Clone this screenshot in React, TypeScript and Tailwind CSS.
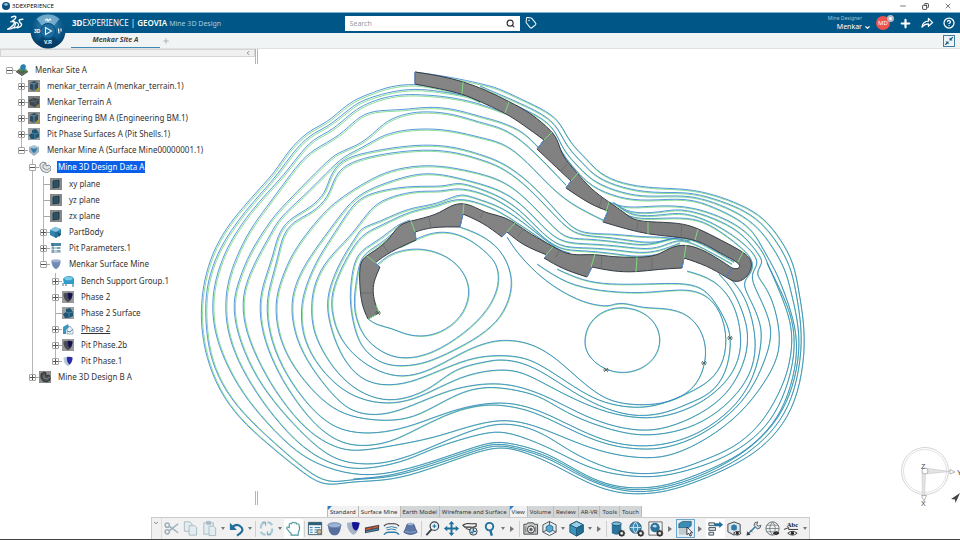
import type { ReactNode } from 'react';
import { ChevronDown, Minus, Plus, Search, Tag, X, Copy, CircleHelp } from 'lucide-react';

/* ------------------------------------------------------------------ */
/* Pit contours                                                        */
/* ------------------------------------------------------------------ */

// West wall going clockwise over the north side, outermost first
const upperContours = [
  '202,303 205,280 213,253 227,228 242,209 260,188 275,172 288,152 307,132 327,123 343,108 357,99 373,93 390,87 415,84 440,89 462,94',
  '206,303 209,280 218,253 232,230 245,212 263,191 278,174 293,153 310,135 328,127 347,111 360,102 377,96 397,91 420,89 447,93 467,96 480,102',
  '213,303 216,280 225,253 237,232 250,213 268,192 283,176 298,157 313,139 332,131 350,114 363,106 380,99 400,95 420,95 447,97 477,103 505,113',
  '226,303 229,280 237,257 250,230 267,207 283,185 300,163 313,150 340,136 357,119 373,111 403,110.5 427,107 453,109 480,117 500,122 523,132 538,147',
  '234,303 240,280 250,253 267,227 277,213 297,192 323,166 337,153 357,146 373,134 387,121 407,114 427,112 453,114 480,123 497,127 517,137 540,158 566,185',
  '243,303 248,280 258,257 272,233 280,218 303,197 327,173 343,157 363,148 380,137 400,131 427,129 453,131 480,138 500,143 520,155 547,183 570,203 603,220',
  '260,303 265,280 273,257 278,237 288,220 310,208 325,193 330,177 343,160 367,153 400,147 430,145 457,148 480,155 500,162 523,177 547,200 567,222 583,233 613,233 637,237 667,237 690,241',
  '267,303 272,280 278,258 283,237 293,222 313,212 328,197 335,177 347,165 370,157 400,152 430,150 457,153 480,160 500,167 523,183 547,207 567,227 582,235 613,237 640,242 660,242 680,237 697,238 737,261',
  '276,303 282,280 293,253 310,230 327,210 343,197 367,182 390,171 420,166 447,167 480,174 500,181 520,193 547,220 565,237 583,238 613,241 640,245 657,243 677,238 697,241 734,262',
  '292,303 298,280 310,257 330,230 347,207 363,193 387,183 413,175 433,174 453,177 480,184 500,191 520,203 540,223 560,241 583,243 613,245 643,249 660,247 677,241 693,243 732,264',
  '302,303 309,280 319,257 335,233 350,210 363,197 387,190 413,186 442,187 455,183 467,185 480,189 500,197 520,210 540,230 560,246 583,247 613,249 640,253 660,250 680,243',
  '312,303 316,282 327,260 350,237 363,220 377,203 400,195 420,191 442,192 457,188 480,193 500,202 520,215 540,234 560,249 583,250 613,253 637,257 660,254',
  '327,303 333,280 343,257 357,237 362,228 380,222 400,212 417,207 437,204 457,195 467,196 480,200 500,207 517,218 537,233 557,249 570,253',
  '331,303 337,280 348,257 362,235 380,227 400,216 420,209 437,207 457,198 480,204 500,212 517,223 537,236 552,247',
  '350,303 352,280 355,263 362,250 380,240 397,225 410,220',
  '354,303 357,280 360,263 367,252 382,243 400,227',
];

// The same contours continued counter-clockwise round the south and east
const lowerContours = [
  '202,327 207,357 220,390 240,418 267,443 300,470 317,481 333,484.5 353,481 387,480 417,473 460,458 487,450 510,448 543,460 567,472 593,485 617,492 640,493.5 667,491 700,480 733,465 760,448 783,423 797,393 804,353 803,320 798,290 793,263 780,240 763,218 740,205 713,195 687,189 653,188 623,183 600,173 587,158 570,143 560,123 547,112 520,99 497,88 480,84 450,77 415,72',
  '207,330 212,360 227,392 250,420 283,450 313,475 333,481.5 353,478.5 387,477.5 417,470 460,456 487,448 505,446 545,457 567,469 593,482 617,489 640,491.5 667,488.5 700,477.5 733,462 758,444 780,420 794,390 801,350 800,320 795,290 790,267 777,243 760,222 740,209 713,199 687,192 653,193 623,187 597,177 583,162 567,147 557,127 543,115 517,102 480,86',
  '215,330 225,360 243,393 267,422 297,452 327,467 360,474.5 390,472.5 427,463 460,452 487,444 505,442.5 543,452 567,465 593,479 617,486 640,487.5 667,485 700,473 733,458 757,440 777,417 790,387 797,350 793,320 783,290 775,270 763,250 753,232 737,219 713,208 687,198 647,201 620,197 592,186 577,170 562,153 552,132',
  '228,330 238,360 257,393 280,423 310,453 347,468 377,466 407,460 433,448 467,438 490,433 510,433 547,447 573,460 600,471 633,476 660,476 687,470 717,460 747,443 770,420 785,390 794,353 792,320 780,290 767,263',
  '238,333 253,370 273,400 300,430 330,457 360,463 387,462 417,453 447,440 480,428 503,424 528,428 550,438 573,453 600,465 623,471.5 647,473.5 677,470 707,458 733,447 757,427 773,403 787,373 792,340 788,315 778,288 767,263 763,253 750,237 733,223 693,207 657,206 627,208 609,202',
  '247,333 262,367 280,397 307,430 337,447 360,450 393,445 433,438 467,427 500,420 527,424 553,433 583,445 613,454 647,457.5 673,454 707,438 740,413 763,383 777,357 779,333 773,302 763,283 756,274 762,263 760,257 747,240 733,228 707,216 680,209 660,212 630,213 613,202',
  '263,333 275,365 291,393 313,422 337,440 360,445 390,442 420,427 453,412 480,406 500,405.5 527,410 553,421 580,434 610,445 640,448.5 667,447 700,435 730,413 750,390 763,363 771,337 768,318 760,297 750,277 757,266 755,257 743,243 713,223 683,213 663,215 633,216 617,205',
  '270,333 282,366 303,398 327,422 350,431 377,432.5 407,427 440,415 467,407 500,402.5 527,407 553,417 580,430 610,442 640,445.5 667,443 700,432 733,407 753,377 761,340 759,322 752,302 742,283 751,274 752,260 740,247 713,227 693,219 667,218 637,219 623,213',
  '279,333 290,360 310,387 333,408 357,417 387,420 413,417 440,403 463,392 483,388 500,388 523,392 543,398 567,413 597,425 627,433 650,434.5 680,430 710,417 737,393 752,367 755,340 750,313 742,293 731,279',
  '295,332 307,360 327,387 347,408 370,414 393,412 420,402 450,390 477,385 500,384 523,388 550,398 577,412 607,424 640,430 667,427 700,413 727,393 743,363 747,340 745,320 733,290 719,274',
  '303,333 315,360 337,385 360,398 387,403 413,399 440,387 467,375 500,370 523,373 550,387 577,400 607,412 640,417.5 667,415 700,403 727,380 738,357 740,335 733,303 713,280 687,271',
  '313,325 319,343 333,367 353,387 377,398 400,399 427,390 447,375 463,367 487,362 500,360 523,363 547,375 573,392 600,406 623,413 643,415.5 667,412 687,403 710,393 725,373 730,343 727,325 713,300 700,288 680,283.5 647,284 610,284 583,280 557,269',
  '332,330 343,357 360,377 383,384.5 410,382 440,370 467,360 490,356 520,357 540,365 567,382 593,398 617,405 640,407 660,404 687,393 710,380 723,360 725.5,333 717,307 700,293 680,290 653,292 633,292.5 600,290 567,283 537,264',
  '338,333 353,353 373,368 397,376 420,373 443,363 467,350 487,343 503,340.5 522,342 541,349 560,362 580,380 600,395 617,402 640,404.5 660,403 680,397 697,383 704,363 705,347 700,330 687,315 667,308.5 643,308.5 627,303 613,304 607,306 583,302 557,288 537,273 517,252 507,237',
  '357,337 368,352 383,363 403,365.5 427,362 453,350 480,335 500,317 510,293 510,273 500,250 480,235 460,227',
  '358,322 367,340 387,354 407,357.5 433,352 463,333 487,310 498,285 496,267 490,257 473,242 453,233 433,233 417,239 400,247',
];

const extraContours = [
  '353,479 387,476 417,468 460,454 487,446 505,444.5 545,455 569,468 593,480.5 617,487.5 640,489.5 667,486.5 700,475.5 731,460 757,441 778,417 792,387 799,350 797,320 790,290 785,270 772,247 757,227 737,213 713,203 687,195 647,197 623,192 595,182 580,167 563,150 555,131 540,117 510,103',
  '378,264 388,256 402,251 423,249 447,257 463,273 469,294 460,317 440,332 420,336 403,333 392,328 377,325 368,319',
  '585,341 588,327 597,316 611,309 627,308 643,313 655,324 660,340 655,356 643,367 626,372.5 608,370 594,361 587,351 585,341',
];

// Each ramp is a ring of edges that meet in sharp corners
const upperRamp = [
  '415,72 440,76 463,82 485,90 509,102 530,113 552,132 558,142 563,157 578,173 590,188 609,202 623,211 633,219 648,222 680,223 698,229 720,240 743,252 750,260 751,268 747,276 740,281 733,281 726,277',
  '726,277 732,268',
  '732,268 737,269 739,266 737,262 717,252 697,240 673,237 648,234 627,229 603,222',
  '603,222 608,211',
  '608,211 590,204 566,188',
  '566,188 571,181',
  '571,181 557,168 537,149',
  '537,149 544,140',
  '544,140 523,125 505,113 480,102 462,94 440,89 415,84',
];

const lowerRamp = [
  '368,319 362,305 360,285 360,270 362,261 368,255 383,245 392,235 400,225 411,221 437,215 450,206 464,203 480,210 487,213 503,217 515,223 530,234 553,246 565,253 580,255 595,254 613,257 637,257 656,256 670,248 686,245 707,252 732,268',
  '732,268 726,277',
  '726,277 707,266 684,258',
  '684,258 682,268',
  '682,268 660,269 635,272 613,271 592,267',
  '592,267 587,277',
  '587,277 563,269 544,258',
  '544,258 547,255',
  '547,255 523,245 507,232',
  '507,232 502,237',
  '502,237 483,223 463,214',
  '463,214 460,227',
  '460,227 433,227 415,232',
  '415,232 416,240',
  '416,240 390,252 375,263',
  '375,263 380,267',
  '380,267 375,279 373,290 375,303 379,313',
];

const greenJoints =
  'M463 82L462 94M509 102L505 113M552 132L544 140M578 173L571 181M609 202L606 212M648 222V234M698 229L695 240M743 252L738 262M367 256L377 264M411 221L415 232M464 203L463 214M515 223L507 232M553 247L545 256M595 254L591 267M637 257L636 272M686 245L684 258M368 319L379 313L376 305';

const blueJoints =
  'M415 72V84M544 140L537 149M571 181L566 188M608 211L603 222M732 268L726 277M415 232L416 240M463 214L460 227M507 232L502 237M547 255L544 258M592 267L587 277M684 258L682 268M375 263L380 267';

const greyJoints =
  'M567 164L561 171M602 198L599 207M638 221L637 231M682 224L681 236M383 245L388 252M429 218L431 227M484 211L480 218M523 230L518 236M559 251L555 258M602 256L601 269M652 258V269M360 293H374';

const marks = [
  [378, 313],
  [606, 370],
  [704, 363],
  [730, 338],
];

type Point = [number, number];

const parse = (s: string) => s.split(' ').map((p) => p.split(',').map(Number) as Point);

// Pulls every point towards (k < 0) or away from (k > 0) its neighbours
function relax(p: Point[], k: number, closed: boolean): Point[] {
  const last = p.length - 1;
  return p.map(([x, y], i) => {
    if (!closed && (i === 0 || i === last)) return [x, y];
    const a = i === 0 ? p[last - 1] : p[i - 1];
    const b = i === last ? p[1] : p[i + 1];
    return [x + k * (x - (a[0] + b[0]) / 2), y + k * (y - (a[1] + b[1]) / 2)];
  });
}

// Uniform cubic B-spline through the filtered points
function spline(raw: Point[], start = 'M') {
  const last = raw.length - 1;
  const closed = last > 2 && raw[0][0] === raw[last][0] && raw[0][1] === raw[last][1];
  const p = relax(relax(raw, -0.3, closed), 0.64, closed);
  const before: Point = closed ? p[last - 1] : [2 * p[0][0] - p[1][0], 2 * p[0][1] - p[1][1]];
  const after: Point = closed ? p[1] : [2 * p[last][0] - p[last - 1][0], 2 * p[last][1] - p[last - 1][1]];
  const q = [before, ...p, after];
  const knot = (i: number, n: 0 | 1) => ((q[i - 1][n] + 4 * q[i][n] + q[i + 1][n]) / 6).toFixed(2);

  let d = `${start}${knot(1, 0)} ${knot(1, 1)}`;
  for (let i = 1; i <= last; i++) {
    const [bx, by] = q[i];
    const [cx, cy] = q[i + 1];
    d += `C${((2 * bx + cx) / 3).toFixed(2)} ${((2 * by + cy) / 3).toFixed(2)} ${((bx + 2 * cx) / 3).toFixed(2)} ${((by + 2 * cy) / 3).toFixed(2)} ${knot(i + 1, 0)} ${knot(i + 1, 1)}`;
  }
  return d;
}

const contourPaths = [
  ...upperContours.map((upper, i) => spline([...parse(upper).reverse(), ...parse(lowerContours[i])])),
  ...extraContours.map((c) => spline(parse(c))),
];

const rampPaths = [upperRamp, lowerRamp].map(
  (edges) => edges.map((edge, i) => spline(parse(edge), i === 0 ? 'M' : 'L')).join('') + 'Z',
);

function MineView() {
  return (
    <svg
      viewBox="0 49 960 450"
      className="absolute inset-x-0 top-0 w-full"
      fill="none"
      role="img"
      aria-label="Pit contours"
    >
      <defs>
        <linearGradient id="rock" x1="0" y1="0" x2="1" y2="1">
          <stop offset="0" stopColor="#868686" />
          <stop offset="1" stopColor="#7a7a7a" />
        </linearGradient>
      </defs>
      <g stroke="#8adf96" transform="translate(1.6 1.7) scale(.998 .9965)">
        {contourPaths.map((d, i) => (
          <path key={i} d={d} />
        ))}
      </g>
      <g stroke="#2f80d0" strokeOpacity=".8">
        {contourPaths.map((d, i) => (
          <path key={i} d={d} />
        ))}
      </g>
      {rampPaths.map((d, i) => (
        <path key={i} d={d} fill="url(#rock)" stroke="#343c46" />
      ))}
      <path d={greyJoints} stroke="#666" strokeWidth=".7" />
      <path d={greenJoints} stroke="#7fd97f" />
      <path d={blueJoints} stroke="#5a93e0" />
      {marks.map(([x, y]) => (
        <path
          key={x}
          d={`M${x - 2} ${y - 2}l4 4M${x + 2} ${y - 2}l-4 4M${x - 3} ${y}h6`}
          stroke="#4d5a55"
          strokeWidth=".8"
        />
      ))}
    </svg>
  );
}

function AxisTriad() {
  return (
    <svg viewBox="0 0 64 66" className="absolute right-0 bottom-0 w-16" fill="none" aria-hidden="true">
      <circle cx="29" cy="31" r="23.500" stroke="#d6d6d6" />
      <circle cx="29" cy="31" r="21.500" stroke="#e2e2e2" />
      <path d="M28 28l26 3.500-26 2.500z" fill="#e4e4e4" stroke="#c4c4c4" strokeWidth=".6" />
      <path d="M26 32l3.500 0-1 24-2 0z" fill="#e4e4e4" stroke="#c4c4c4" strokeWidth=".6" />
      <path d="M54 29.500l5 2.500-5 2z" fill="#fff" stroke="#999" strokeWidth=".7" />
      <path d="M25.500 55.500h5l-2.500 5.500z" fill="#fff" stroke="#999" strokeWidth=".7" />
      <circle cx="29" cy="31" r="3" fill="#fff" stroke="#b5b5b5" />
      <path d="M64 53l-9 6 4 .5.500 3.500z" fill="#444" />
      <g className="font-['Liberation_Sans'] text-[7px]" fill="#444">
        <text x="25" y="29">Z</text>
        <text x="61" y="35">Y</text>
        <text x="25" y="66">X</text>
      </g>
    </svg>
  );
}

/* ------------------------------------------------------------------ */
/* Specification tree                                                  */
/* ------------------------------------------------------------------ */

type IconKind =
  | 'site' | 'block' | 'terrain' | 'surface' | 'mine' | 'part' | 'plane' | 'body'
  | 'params' | 'shield' | 'bench' | 'shieldDark' | 'phase' | 'shieldLight' | 'partDark';

interface TreeNode {
  label: string;
  icon: IconKind;
  leaf?: boolean;
  look?: 'selected' | 'underlined';
  children?: TreeNode[];
}

const tree: TreeNode = {
  label: 'Menkar Site A',
  icon: 'site',
  children: [
    { label: 'menkar_terrain A (menkar_terrain.1)', icon: 'block' },
    { label: 'Menkar Terrain A', icon: 'terrain' },
    { label: 'Engineering BM A (Engineering BM.1)', icon: 'block' },
    { label: 'Pit Phase Surfaces A (Pit Shells.1)', icon: 'surface' },
    {
      label: 'Menkar Mine A (Surface Mine00000001.1)',
      icon: 'mine',
      children: [
        {
          label: 'Mine 3D Design Data A',
          icon: 'part',
          look: 'selected',
          children: [
            { label: 'xy plane', icon: 'plane', leaf: true },
            { label: 'yz plane', icon: 'plane', leaf: true },
            { label: 'zx plane', icon: 'plane', leaf: true },
            { label: 'PartBody', icon: 'body' },
            { label: 'Pit Parameters.1', icon: 'params' },
            {
              label: 'Menkar Surface Mine',
              icon: 'shield',
              children: [
                { label: 'Bench Support Group.1', icon: 'bench' },
                { label: 'Phase 2', icon: 'shieldDark' },
                { label: 'Phase 2 Surface', icon: 'surface', leaf: true },
                { label: 'Phase 2', icon: 'phase', look: 'underlined' },
                { label: 'Pit Phase.2b', icon: 'shieldDark' },
                { label: 'Pit Phase.1', icon: 'shieldLight' },
              ],
            },
          ],
        },
        { label: 'Mine 3D Design B A', icon: 'partDark' },
      ],
    },
  ],
};

const shieldPath = 'M1.500 2.500Q6 .8 10.500 2.500Q10.800 8.500 6 11.300Q1.200 8.500 1.500 2.500z';

const treeIcons: Record<IconKind, ReactNode> = {
  site: (
    <>
      <path d="M0 7l6-3 6 3-6 4z" fill="#55664a" />
      <path d="M0 7l6 4v1L0 8zM12 7l-6 4v1l6-4z" fill="#2f3b35" />
      <path d="M5 1l3-1 2 2-1 4-3 1-2-3z" fill="#2a7fb0" />
      <path d="M2 6l2-2 2 3zM8 7l2-3 1 3z" fill="#5ba046" />
    </>
  ),
  block: (
    <>
      <path d="M0 0h12v12H0z" fill="#8d8d8d" />
      <path d="M2 3l4-2 4 1v6l-4 3-4-2z" fill="#2e4d63" />
      <path d="M2 3l4 1v7M6 4l4-2" stroke="#86a9bd" strokeWidth=".7" />
      <path d="M8 10l3-3v3l-3 2z" fill="#a99b2b" />
    </>
  ),
  terrain: (
    <>
      <path d="M0 0h12v12H0z" fill="#7c7c7c" />
      <path d="M1 4l4-2 6 1v5L7 11 2 9z" fill="#3c4750" />
      <path d="M2 5l4 1 4-2M4 3l5 6" stroke="#6c7d86" strokeWidth=".6" />
      <path d="M8 11l3-3v2l-2 2z" fill="#9b8b2b" />
    </>
  ),
  surface: (
    <>
      <path d="M0 0h12v12H0z" fill="#9aa0a3" />
      <path d="M1 7l3-2V2l4-1 3 4v4l-4 2-4 0z" fill="#1f5673" />
      <path d="M4 5l3 1 4-1M7 6v5" stroke="#5f93ad" strokeWidth=".7" />
    </>
  ),
  mine: (
    <>
      <path d="M1 3l5-2 5 2v5l-5 4-5-4z" fill="#9fb1bf" />
      <path d="M3 3q3-1 6 0q0 4-3 6q-3-2-3-6z" fill="#2d7ba6" />
      <path d="M1 3l5-2 5 2-5 2z" fill="#c9d8e2" opacity=".7" />
    </>
  ),
  part: (
    <>
      <path d="M1 3l3-2 3 1v3l3-1 2 2v3l-4 3-5-2-2-4z" fill="#e3e6e8" stroke="#6b7378" strokeWidth=".8" />
      <path d="M4 4v3l4 2 3-2M4 4l3-2" stroke="#6b7378" strokeWidth=".7" fill="none" />
    </>
  ),
  partDark: (
    <>
      <path d="M0 0h12v12H0z" fill="#8c8c8c" />
      <path d="M2 3l3-2 2 1v3l3-1 1 2v3l-3 2-4-1-2-3z" fill="#4b4f52" stroke="#25282a" strokeWidth=".8" />
      <path d="M5 4v3l3 1 3-2" stroke="#999" strokeWidth=".7" fill="none" />
    </>
  ),
  plane: (
    <>
      <path d="M0 0h12v12H0z" fill="#86898a" />
      <path d="M3 3l6-1v7l-6 1z" fill="#2c5266" stroke="#18323f" strokeWidth=".8" />
    </>
  ),
  body: (
    <>
      <path d="M0 4l5-3 6 2v6l-5 3-6-3z" fill="#2f83ad" />
      <path d="M0 4l6 2 5-3-6-2z" fill="#8cc3dd" />
      <path d="M6 6v6" stroke="#16506d" strokeWidth=".8" />
      <path d="M7 6l4 2-2 3z" fill="#1d4e68" />
    </>
  ),
  params: (
    <>
      <path d="M1 1h10v3H1z" fill="#4d87a6" />
      <path d="M1 5h10v2H1zM1 8h10v3H1z" fill="#b9ced9" />
      <path d="M3 1v10M7 6h3M7 9h3" stroke="#2e6480" strokeWidth=".8" />
    </>
  ),
  shield: (
    <>
      <path d={shieldPath} fill="#7089b5" />
      <ellipse cx="6" cy="3" rx="4.600" ry="1.400" fill="#9cafd0" />
    </>
  ),
  shieldDark: (
    <>
      <path d="M0 0h12v12H0z" fill="#9a9a9a" />
      <path d={shieldPath} fill="#4a4a55" />
      <path d="M6 2q2-.5 4.500.4q0 4-2.500 6.600q-3-2-2-7z" fill="#12124e" />
    </>
  ),
  shieldLight: (
    <>
      <path d={shieldPath} fill="#b9c8dc" />
      <path d="M5 2q3-.5 5.500.4q0 4.500-3 7q-3.500-2.400-2.500-7.400z" fill="#2b2ba8" />
    </>
  ),
  bench: (
    <>
      <path d="M1 4q2-3 6-3t5 3v5H2z" fill="#2f9cc9" />
      <ellipse cx="6.500" cy="3.500" rx="4" ry="1.800" fill="#7ccbe6" />
      <path d="M1 8v3M11 9v3M4 9v2" stroke="#2b6c8b" />
    </>
  ),
  phase: (
    <>
      <path d="M1 4l5-3 1 3-3 3v4H1z" fill="#3a97c2" />
      <path d="M5 6l3-3 3 4v4H5z" fill="#e9eef1" stroke="#8499a5" strokeWidth=".7" />
      <path d="M5 8l3 1 3-3" stroke="#2f83ad" strokeWidth=".8" fill="none" />
    </>
  ),
};

function TreeItem({ node, depth }: { node: TreeNode; depth: number }) {
  const indent = depth === 0 ? '' : depth === 2 || depth === 3 ? 'ml-[11px]' : 'ml-3';
  const rail =
    depth === 0
      ? ''
      : 'before:absolute before:top-0 before:left-[3px] before:h-full before:w-px before:bg-[#b5b5b5] last:before:h-2';

  return (
    <li className={`relative ${indent} ${rail}`}>
      <div className="flex h-4 items-center">
        {node.leaf ? (
          <span className="ml-[3px] h-px w-[7px] bg-[#a8a8a8]" />
        ) : (
          <>
            <button
              type="button"
              aria-label={`Toggle ${node.label}`}
              className="relative flex size-[7px] items-center justify-center rounded-[1px] border border-[#a5a5a5] bg-white"
            >
              <span className="absolute h-px w-[5px] bg-[#555]" />
              {!node.children && <span className="absolute h-[5px] w-px bg-[#555]" />}
            </button>
            <span className="h-px w-[3px] bg-[#a8a8a8]" />
          </>
        )}
        <svg viewBox="0 0 12 12" className="mr-1.5 size-3 shrink-0" fill="none" aria-hidden="true">
          {treeIcons[node.icon]}
        </svg>
        <a
          href="#"
          className={
            node.look === 'selected'
              ? 'bg-[#0a5fe8] px-px leading-3 text-white'
              : node.look === 'underlined'
                ? 'px-px underline'
                : 'px-px'
          }
        >
          {node.label}
        </a>
      </div>
      {node.children && (
        <ul className={depth > 0 ? 'pt-px' : ''}>
          {node.children.map((child, i) => (
            <TreeItem key={i} node={child} depth={depth + 1} />
          ))}
        </ul>
      )}
    </li>
  );
}

/* ------------------------------------------------------------------ */
/* Top bar                                                             */
/* ------------------------------------------------------------------ */

function Compass() {
  return (
    <button type="button" aria-label="Compass" className="absolute top-0 left-[30px] z-10 size-9">
      <svg viewBox="0 0 36 36" className="size-9" aria-hidden="true">
        <defs>
          <radialGradient id="orb" cx=".5" cy=".35" r=".65">
            <stop offset="0" stopColor="#3f8fc0" />
            <stop offset=".6" stopColor="#0d5c8e" />
            <stop offset="1" stopColor="#033a61" />
          </radialGradient>
        </defs>
        <circle cx="18" cy="18" r="17.500" fill="url(#orb)" />
        <path d="M6.500 6A17 17 0 0 1 29.500 6L24 12.500A8.500 8.500 0 0 0 12 12.500z" fill="#8dbdd9" opacity=".75" />
        <path d="M6.500 30A17 17 0 0 0 29.500 30L24 23.500A8.500 8.500 0 0 1 12 23.500z" fill="#04395f" opacity=".6" />
        <circle cx="18" cy="18" r="7.500" fill="#1b6c9f" stroke="#0a4b78" />
        <path d="M15.500 14.500l6 3.500-6 3.500z" fill="none" stroke="#e6f1f7" strokeWidth="1.100" />
        <path d="M15 7.500l2-1.500 1 2 2-2 1 1.500M28.500 15.500l.5 5M31 15.500v3" stroke="#fff" strokeWidth="1.100" fill="none" />
        <g className="font-['Liberation_Sans'] text-[5px] font-bold" fill="#fff">
          <text x="4" y="19.500">3D</text>
          <text x="14" y="31">V.R</text>
        </g>
      </svg>
    </button>
  );
}

function TopBar() {
  return (
    <header className="relative flex h-[21px] items-center border-t border-[#7fb4d2] bg-[#005686] text-white">
      <svg viewBox="0 0 18 16" className="ml-[6px] h-4 w-[18px]" fill="none" stroke="#fff" strokeLinecap="round" aria-hidden="true">
        <path d="M5.500 2.200Q10 .2 9.800 2.200T6 6.200Q9.500 6 8.200 8.600T1.800 14.200" strokeWidth="1.400" />
        <path d="M1.800 14.200Q5 14.600 8.500 12" strokeWidth="1.100" />
        <path d="M9.800 8l-1.600 5q4.800-1 4.300-3.700T4.500 6.800" strokeWidth="1.100" />
        <path d="M16.800 4.200q-4.300.2-3.600 1.800t2.300 3q.8 2.500-4.300 3.700" strokeWidth="1.400" />
      </svg>
      <Compass />
      <h1 className="ml-12 text-[8px] whitespace-nowrap">
        <b>3D</b>EXPERIENCE | <b className="font-semibold">GEOVIA</b>{' '}
        <span className="text-[7px] text-[#a9cbdf]">Mine 3D Design</span>
      </h1>
      <form className="absolute left-[36%] ml-[-1px] flex w-[175px] items-center bg-white">
        <input
          type="search"
          aria-label="Search"
          placeholder="Search"
          className="h-[15px] min-w-0 flex-1 px-[5px] text-[7px] text-[#333] outline-none placeholder:text-[#999]"
        />
        <button type="submit" aria-label="Run search" className="pr-[5px]">
          <Search className="size-[9px] text-[#333]" strokeWidth={3} />
        </button>
      </form>
      <button type="button" aria-label="Tags" className="absolute left-[55%] ml-[-3px]">
        <Tag className="size-3 rotate-6" strokeWidth={2} />
      </button>

      <div className="ml-auto flex items-center pr-[5px]">
        <button type="button" className="flex flex-col items-end">
          <span className="text-[5px] leading-[8px] text-[#9cc3da]">Mine Designer</span>
          <span className="text-[7px] leading-[10px]">Menkar</span>
        </button>
        <ChevronDown className="mt-2 ml-[2px] size-[7px]" strokeWidth={4} />
        <span className="relative ml-[5px] flex size-[14px] items-center justify-center rounded-full bg-[#ef5350] text-[6px]">
          MD
          <span className="absolute -top-px -right-1 flex size-[7px] rounded-full border-2 border-[#b9bec2] bg-white" />
        </span>
        <button type="button" aria-label="Add" className="ml-[9px]">
          <Plus className="size-[13px]" strokeWidth={4} />
        </button>
        <button type="button" aria-label="Share" className="ml-[9px]">
          <svg viewBox="0 0 14 12" className="w-[13px]" fill="none" stroke="currentColor" strokeWidth="1.300" strokeLinejoin="round" aria-hidden="true">
            <path d="M1 11q1-6.500 7-6.500V1.500L12.500 6 8 10V7.500Q4 7.500 1 11z" />
          </svg>
        </button>
        <button type="button" aria-label="Help" className="ml-[9px]">
          <CircleHelp className="size-3" strokeWidth={2.5} />
        </button>
      </div>
    </header>
  );
}

/* ------------------------------------------------------------------ */
/* Action bar                                                          */
/* ------------------------------------------------------------------ */

const sections = [
  'Standard', 'Surface Mine', 'Earth Model', 'Wireframe and Surface', 'View',
  'Volume', 'Review', 'AR-VR', 'Tools', 'Touch',
];
const litSections = ['Standard', 'Surface Mine', 'View'];

const cube = (
  <>
    <path d="M2 5l7-3.500L16 5v8l-7 4-7-4z" fill="#3d93be" stroke="#1d5977" />
    <path d="M2 5l7 3.500L16 5 9 1.500z" fill="#9bd0e6" stroke="#1d5977" />
    <path d="M9 8.500V17l7-4V5z" fill="#226e95" stroke="#1d5977" />
  </>
);

const gear = (
  <>
    <circle cx="13.500" cy="14" r="2.500" fill="#f1f1f1" stroke="#333" strokeWidth="1.500" />
    <path d="M13.500 10.300v7.400M9.800 14h7.400M11 11.400l5 5.200M16 11.400l-5 5.200" stroke="#333" />
    <circle cx="13.500" cy="14" r="1.300" fill="#f1f1f1" />
  </>
);

const eye = (
  <>
    <path d="M8 14q4-4 8 0-4 4-8 0z" fill="#f1f1f1" stroke="#333" />
    <circle cx="12" cy="14" r="1.500" fill="#222" />
  </>
);

const toolIcons: Record<string, ReactNode> = {
  Cut: (
    <g stroke="#9db1bb" strokeWidth="1.600">
      <path d="M6.500 11.500L16 4M6.500 6.500L16 13.500" />
      <circle cx="4.500" cy="5.500" r="2.200" />
      <circle cx="4.500" cy="12.500" r="2.200" />
    </g>
  ),
  Copy: (
    <g fill="#e3ecf0" stroke="#a9bbc4">
      <path d="M2.500 2h6l2 2v8h-8z" />
      <path d="M7.500 6h6l2 2v8h-8z" />
    </g>
  ),
  Paste: (
    <g fill="#e3ecf0" stroke="#a9bbc4">
      <path d="M3 3h10v12H3z" />
      <path d="M6 1.500h4v3H6z" fill="#a9bbc4" />
      <path d="M8.500 6.500h5l2 2v8h-7z" />
    </g>
  ),
  Undo: (
    <>
      <path d="M2 3v7.500h7.500z" fill="#1f6f9c" />
      <path d="M5 7Q10 3 14 7.500t-4.500 9" stroke="#1f6f9c" strokeWidth="2.200" />
    </>
  ),
  Update: (
    <g stroke="#a9cbd8" strokeWidth="2.300">
      <path d="M7 2.500Q2.500 4 3 9M3 12.500q1.500 3 5 3M11 15.500Q15.500 14 15 9M15 5.500q-1.500-3-5-3" />
      <path d="M4.500 2.500H8V6M13.500 15.500H10V12" strokeWidth="1.200" stroke="#8fabb7" />
    </g>
  ),
  Hand: (
    <path
      d="M5 13L1.800 8.700q0-2.200 2.700-.7V4.500q1-1.700 2.500-.6.800-2.600 2.800-.8 2.200-1 2.600 1 2.600-.5 2.600 1.900 1.400 3.500-1 7V16H6.500v-2z"
      fill="#fff"
      stroke="#4a9a9e"
      strokeWidth="1.200"
    />
  ),
  Parameters: (
    <>
      <path d="M1.500 2.500h14v13h-14z" fill="#f4f8fa" stroke="#40606f" />
      <path d="M1.500 2.500h14v3h-14z" fill="#2c5f7b" />
      <path d="M3 8h3M3 10.500h3M3 13h3M8 8h6M8 10.500h4M8 13h3" stroke="#2c7cab" />
      <circle cx="13" cy="12.500" r="2.500" fill="#c9b78c" stroke="#666" />
    </>
  ),
  'Pit bowl': (
    <>
      <path d="M2 5.500Q2.500 13 6 15.500q3 1.200 6 0Q15.500 13 16 5.500z" fill="#566f9d" />
      <ellipse cx="9" cy="5.500" rx="7" ry="2.600" fill="#9eb2d3" stroke="#6d83ad" />
    </>
  ),
  'Pit phase': (
    <>
      <path d="M2 3q5-1.500 13 0Q15.500 12 9 16 2 12 2 3z" fill="#a7b3c6" />
      <path d="M7.500 2.300q4-.6 8 .7Q15 9 11.500 11.500 7 9 7.500 2.300z" fill="#14149a" />
    </>
  ),
  Bench: (
    <>
      <path d="M1 8l15-3v6L1 14z" fill="#43474b" />
      <path d="M2 10l6-1.500M9 8.500l6-1.500" stroke="#e2562f" strokeWidth="1.500" />
      <path d="M2 12.500l13-3" stroke="#3c97d0" />
    </>
  ),
  Layers: (
    <>
      <path d="M1 6.500Q3 4 5.500 4h7Q15 4 17 6.500" stroke="#333" strokeWidth="1.200" />
      <path d="M3 8.500Q9 5.500 15 8.500M4 10.500q5-2 10 0" stroke="#2f7ba6" />
      <path d="M1 15.500Q3 13 5.500 13h7Q15 13 17 15.500" stroke="#2f7ba6" strokeWidth="1.600" />
    </>
  ),
  Dump: (
    <>
      <path d="M2 13Q4 9 5.500 4.500q3.500-2 7 0Q14 9 16 13q-7 4.500-14 0z" fill="#5c76a5" stroke="#455b86" />
      <ellipse cx="9" cy="4.300" rx="3.300" ry="1.300" fill="#9eb2d3" />
      <path d="M3 12q6 2.500 12 0" stroke="#93a9cc" />
    </>
  ),
  'Fit all': (
    <g stroke="#3a4449" strokeWidth="1.300">
      <circle cx="11" cy="6.500" r="4.500" fill="#e7f1f6" />
      <path d="M8 10l-5.500 6" strokeWidth="2" />
      <path d="M9 6.500h4M11 4.500v4" stroke="#2c7cab" />
    </g>
  ),
  Pan: (
    <path d="M9 1l3 3.500h-2V8h3.500V6L17 9l-3.500 3v-2H10v3.500h2L9 17l-3-3.500h2V10H4.500v2L1 9l3.500-3v2H8V4.500H6z" fill="#1f6f9c" />
  ),
  Rotate: (
    <>
      <path d="M1 5.500q3-2.500 8-1.500h6v2.500q-3 1.500-6 1H3z" fill="#f1f1f1" stroke="#333" strokeWidth="1.200" />
      <circle cx="12" cy="12" r="4" fill="#dceaf1" stroke="#333" />
      <path d="M12 8v4h3M9 12.500l3 1.500" stroke="#1f6f9c" strokeWidth="1.500" />
      <path d="M4 9l5 1.500" stroke="#333" />
    </>
  ),
  Zoom: (
    <g stroke="#1f6f9c" strokeWidth="2">
      <circle cx="9" cy="7" r="4" />
      <path d="M10 11.500l1.500 5" strokeWidth="2.500" />
    </g>
  ),
  Capture: (
    <>
      <path d="M2 4.500h3l1-1.500h6l1 1.500h3.500V15H2z" fill="#c9cccd" stroke="#45494b" />
      <path d="M4 7v6M14.500 7v6" stroke="#73787b" />
      <circle cx="9.500" cy="10" r="3.800" fill="#e8e8e8" stroke="#333" />
      <circle cx="9.500" cy="10" r="1.800" fill="#5d6265" />
    </>
  ),
  'Iso view': (
    <>
      <path d="M9 1.500l7 3.700v7.600L9 16.500l-7-3.700V5.200z" fill="#e9eef0" stroke="#4a5357" />
      <path d="M9 5l3.500 2v4L9 13l-3.500-2V7z" fill="#57a6cc" stroke="#266c92" />
      <path d="M9 1.500V5M2 12.800L5.500 11M16 12.800L12.500 11" stroke="#4a5357" />
    </>
  ),
  Shading: cube,
  Section: (
    <>
      <path d="M3 4v10q5 3 10 0V4z" fill="#2c7299" />
      <ellipse cx="8" cy="4" rx="5" ry="2" fill="#7fbbd6" stroke="#1f5673" />
      {gear}
    </>
  ),
  Ambience: (
    <>
      <circle cx="8" cy="8" r="6" fill="#3d8cb5" stroke="#1f5673" />
      <path d="M2 8h12M8 2q-5 6 0 12M8 2q5 6 0 12" stroke="#cfe6f0" />
      {gear}
    </>
  ),
  Scene: (
    <>
      <path d="M2 2h14v14H2z" fill="#f8f8f8" stroke="#666" />
      <circle cx="8.500" cy="8" r="5" fill="#2c7299" />
      <path d="M5.500 6.500q3-3 5 0q-1 3-5 0z" fill="#b8dcea" />
      {gear}
    </>
  ),
  Select: (
    <>
      <path d="M2 4l4-2.500h9V6l-3 2.500H2z" fill="#3d8cb5" stroke="#1f5673" strokeWidth=".8" />
      <path d="M2 8.500h10v7H2z" fill="#c3cacd" />
      <path d="M10.500 7.500v8l2-1.500 1.300 3 1.500-.7-1.300-2.800h2.500z" fill="#fff" stroke="#222" strokeWidth=".9" />
    </>
  ),
  Reorder: (
    <>
      <path d="M2 3h6v3H2zM2 8h7v3H2zM2 13h5v3H2z" fill="#dce3e6" stroke="#42525a" />
      <path d="M8 3.500h5V1.500l4 3.500-4 3.500V6.500H8z" fill="#1f6f9c" />
    </>
  ),
  'Hide or show': (
    <>
      <path d="M2 4.500L8.500 2 15 4.500v8L8.500 16 2 12.500z" fill="#dfe5e8" stroke="#3a4449" />
      <path d="M5.500 6l3-1.500 3 1.500v4l-3 1.500-3-1.500z" fill="#2c7cab" />
      {eye}
    </>
  ),
  Measure: (
    <>
      <path d="M4 14l8-8" stroke="#2c7cab" strokeWidth="1.600" />
      <path d="M9.500 5.500q0-3.500 4-3.500l-1 3 1.500 1.500 3-1q-.5 4-4 4z" fill="#d3dadd" stroke="#566268" />
      <path d="M5.500 10.500l2.500 2.500" stroke="#566268" />
      <path d="M1.500 16.500l1-4.500 3.500 3.500z" fill="#3a4449" />
    </>
  ),
  Globe: (
    <g stroke="#6c7376">
      <circle cx="9" cy="9" r="7" fill="#eef0f1" />
      <path d="M2 9h14M3 5.500h12M3 12.500h12M9 2q-6 7 0 14M9 2q6 7 0 14" strokeWidth=".8" />
      <path d="M10 14q3-3 6 0-3 3-6 0z" fill="#444" stroke="#222" />
    </g>
  ),
  Annotations: (
    <>
      <text x="4" y="7" className="font-['Liberation_Serif'] text-[7px] font-bold" fill="#222">Abc</text>
      <path d="M1 10l5-2v2h10" stroke="#333" />
      <path d="M5 14q5-4 10 0-5 4-10 0z" fill="#fff" stroke="#333" />
      <circle cx="10" cy="14" r="1.700" fill="#222" />
    </>
  ),
};

const tools = [
  'Cut', 'Copy', 'Paste', 'v', 'Undo', 'v', '|', 'Update', 'v', 'Hand', '|',
  'Parameters', 'Pit bowl', 'Pit phase', 'Bench', 'Layers', 'Dump', '|',
  'Fit all', 'Pan', 'Rotate', 'Zoom', 'v', '>', '|',
  'Capture', 'Iso view', 'v', 'Shading', 'v', '>', '|',
  'Section', 'Ambience', 'Scene', '>', 'Select', '>',
  'Reorder', 'Hide or show', 'Measure', 'Globe', 'Annotations', 'v',
];

function toolFrame(name: string) {
  if (name === 'Select') return 'bg-[#e2eef5] border border-[#6da7cb]';
  if (name === 'Hand' || name === 'Reorder') return 'bg-white';
  return '';
}

function Tool({ name }: { name: string }) {
  if (name === '|') return <span className="mx-px h-4 w-px bg-[#cfcfcf]" />;
  if (name === 'v')
    return (
      <button type="button" aria-label="More" className="flex w-2 justify-center">
        <span className="border-x-[2px] border-t-[3px] border-x-transparent border-t-[#777]" />
      </button>
    );
  if (name === '>')
    return (
      <button type="button" aria-label="Expand" className="flex w-[11px] justify-center">
        <span className="border-y-[3px] border-l-[4px] border-y-transparent border-l-[#777]" />
      </button>
    );
  return (
    <button
      type="button"
      aria-label={name}
      className={`flex h-[19px] w-[19px] items-center justify-center ${toolFrame(name)}`}
    >
      <svg viewBox="0 0 18 18" className="size-[17px] shrink-0" fill="none" aria-hidden="true">
        {toolIcons[name]}
      </svg>
    </button>
  );
}

function ActionBar() {
  return (
    <footer className="relative flex flex-col items-center border-b border-[#444]">
      <nav className="ml-[9px] flex border-r border-[#bbb]">
        {sections.map((name) => (
          <button
            key={name}
            type="button"
            className={`relative h-[11px] border-l border-[#bbb] px-[2px] text-[6px] leading-[12px] whitespace-nowrap text-[#333] ${
              litSections.includes(name) ? 'bg-[#f1f1f1]' : 'bg-[#d3d6d6]'
            }`}
          >
            {(name === 'Standard' || name === 'View') && (
              <span className="absolute top-0 left-0 border-t-[4px] border-r-[4px] border-t-[#2f7fc0] border-r-transparent" />
            )}
            {name}
          </button>
        ))}
      </nav>
      <div className="flex h-[22px] items-center border border-b-0 border-[#cbcbcb] bg-[#f1f1f1]">
        <button type="button" aria-label="Collapse" className="flex h-full w-[10px] justify-center border-r border-[#ddd] pt-[2px]">
          <ChevronDown className="size-[6px] text-[#555]" strokeWidth={3} />
        </button>
        {tools.map((name, i) => (
          <Tool key={i} name={name} />
        ))}
      </div>
    </footer>
  );
}

export default function App() {
  return (
    <div className="flex min-h-screen flex-col overflow-hidden bg-white font-['Noto_Sans','Open_Sans',sans-serif] text-[#333]">
      <div className="flex h-3 items-center px-[2px]">
        <svg viewBox="0 0 8 8" className="size-2" aria-hidden="true">
          <circle cx="4" cy="4" r="4" fill="#0b4f7d" />
          <path d="M1.500 2.500Q4-.5 6.500 2.500L4 4z" fill="#8cc0dd" />
        </svg>
        <span className="ml-[2px] font-['Open_Sans',sans-serif] text-[6px] text-black">3DEXPERIENCE</span>
        <div className="ml-auto flex gap-[15px] pr-[6px] text-[#333]">
          <button type="button" aria-label="Minimize"><Minus className="size-2" /></button>
          <button type="button" aria-label="Restore"><Copy className="size-[7px] -scale-x-100" strokeWidth={3} /></button>
          <button type="button" aria-label="Close"><X className="size-2" /></button>
        </div>
      </div>

      <TopBar />

      <div className="flex h-4 items-center border-b border-[#dfe2e4] bg-[#f1f4f5]">
        <button
          type="button"
          className="ml-[71px] h-[15px] w-[89px] border-b border-[#3f87b5] text-[7px] leading-[14px] font-bold text-[#444] italic"
        >
          Menkar Site A
        </button>
        <button type="button" aria-label="New tab" className="ml-[2px]">
          <Plus className="size-2 text-[#999]" />
        </button>
        <button
          type="button"
          aria-label="Leave full view"
          className="mr-[5px] ml-auto flex size-3 items-center justify-center border border-[#3f7ea3]"
        >
          <svg viewBox="0 0 10 10" className="size-[10px]" fill="#0f5b88" aria-hidden="true">
            <path d="M5.500 4.500V1.500l1 1L8.500.8l.7.700L7.500 3.500l1 1zM4.500 5.500v3l-1-1L1.500 9.200l-.7-.7L2.500 6.500l-1-1z" />
          </svg>
        </button>
      </div>

      <main className="relative flex flex-1 flex-col">
        <MineView />
        <AxisTriad />
        <aside className="relative flex w-[258px] flex-1 flex-col">
          <div className="flex">
            <div className="flex h-2 flex-1 items-center justify-end border border-[#d4d4d4] bg-[#f0f0f0] pr-[3px]">
              <button type="button" aria-label="Collapse tree">
                <ChevronDown className="size-[6px] rotate-90 text-[#666]" strokeWidth={3} />
              </button>
            </div>
            <span className="-mb-[7px] w-[3px] border-x border-[#b5b5b5]" />
          </div>
          <ul className="pt-[5px] pl-[6px] text-[8px] whitespace-nowrap">
            <TreeItem node={tree} depth={0} />
          </ul>
          <span className="mt-auto mb-px ml-auto h-[14px] w-[3px] border-x border-[#b5b5b5]" />
        </aside>
      </main>

      <ActionBar />
    </div>
  );
}
